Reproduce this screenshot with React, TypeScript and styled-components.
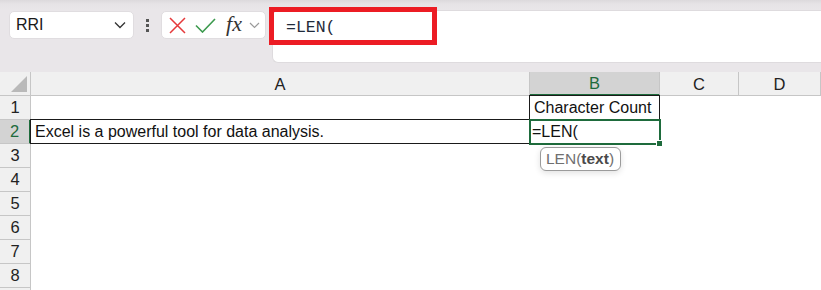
import React from "react";
import styled, { createGlobalStyle } from "styled-components";

const Global = createGlobalStyle`
  html, body { margin: 0; padding: 0; background: #ffffff; }
  body { font-family: "Liberation Sans", Arial, sans-serif; width: 821px; height: 290px; overflow: hidden; }
`;

const Page = styled.div`
  width: 821px;
  height: 290px;
  overflow: hidden;
  display: flex;
  flex-direction: column;
`;

const Toolbar = styled.div`
  flex-shrink: 0;
  height: 72px;
  box-sizing: border-box;
  background: linear-gradient(#dcd9dc 0px, #e6e3e6 4px, #e9e6e9 10px);
  display: flex;
  align-items: flex-start;
  padding: 0 0 0 9px;
`;

const NameBox = styled.div`
  margin-top: 11px;
  width: 125px;
  height: 28px;
  box-sizing: border-box;
  background: #fff;
  border-radius: 5px;
  border: 1px solid #e0dde0;
  display: flex;
  align-items: center;
  justify-content: space-between;
  padding: 0 7px 0 6px;
  font-size: 16px;
  color: #1a1a1a;
`;

const Dots = styled.div`
  width: 27px;
  margin-top: 19px;
  display: flex;
  flex-direction: column;
  align-items: center;
  gap: 2px;
  & > span { width: 3px; height: 3px; background: #555; display: block; }
`;

const FnBox = styled.div`
  margin-top: 11px;
  width: 105px;
  height: 28px;
  box-sizing: border-box;
  background: #fff;
  border-radius: 5px;
  border: 1px solid #e0dde0;
  display: flex;
  align-items: center;
  padding-left: 4px;
`;

const IconSlot = styled.div<{ $w: number }>`
  width: ${(p) => p.$w}px;
  display: flex;
  align-items: center;
  justify-content: center;
`;

const Fx = styled.span`
  font-family: "Liberation Serif", "Times New Roman", serif;
  font-style: italic;
  font-size: 22px;
  color: #333;
  line-height: 1;
  margin-top: -3px;
`;

const FormulaBar = styled.div`
  position: relative;
  margin-top: 10px;
  margin-left: 6px;
  flex: 1;
  height: 53px;
  background: #fff;
  border: 1px solid #dedbde;
  border-right: none;
  border-radius: 6px 0 0 6px;
  box-sizing: border-box;
  padding: 6px 0 0 13px;
`;

const FormulaText = styled.span`
  font-family: "Liberation Mono", "Courier New", monospace;
  font-size: 16.5px;
  color: #1f2a3a;
  line-height: 22px;
`;

const Highlight = styled.div`
  position: absolute;
  left: -4px;
  top: -4px;
  width: 168px;
  height: 38px;
  box-sizing: border-box;
  border: 5px solid #ec1c24;
  pointer-events: none;
`;

const Sheet = styled.div`
  position: relative;
  flex: 1;
  min-height: 0;
  overflow: hidden;
  display: flex;
  flex-direction: column;
  background: #fff;
`;

const Row = styled.div`
  flex-shrink: 0;
  display: grid;
  grid-template-columns: 31px 499px 130px 79px 82px;
  height: 24px;
`;

const Corner = styled.div`
  background: #f0f0f0;
  border-right: 1px solid #c6c6c6;
  border-bottom: 1px solid #c6c6c6;
  position: relative;
  &::after {
    content: "";
    position: absolute;
    right: 3px;
    bottom: 3px;
    width: 0;
    height: 0;
    border-left: 16px solid transparent;
    border-bottom: 16px solid #b9b9b9;
  }
`;

const ColHead = styled.div<{ $sel?: boolean }>`
  background: ${(p) => (p.$sel ? "#d3d3d3" : "#f0f0f0")};
  color: ${(p) => (p.$sel ? "#1e6b3c" : "#222")};
  border-right: 1px solid #c6c6c6;
  border-bottom: ${(p) => (p.$sel ? "2px solid #1e6b3c" : "1px solid #c6c6c6")};
  box-sizing: border-box;
  display: flex;
  align-items: center;
  justify-content: center;
  font-size: 16.5px;
  padding-top: 1px;
`;

const RowHead = styled.div<{ $sel?: boolean }>`
  background: ${(p) => (p.$sel ? "#d3d3d3" : "#f0f0f0")};
  color: ${(p) => (p.$sel ? "#1e6b3c" : "#222")};
  border-right: ${(p) => (p.$sel ? "2px solid #1e6b3c" : "1px solid #c6c6c6")};
  border-bottom: 1px solid #c6c6c6;
  box-sizing: border-box;
  display: flex;
  align-items: center;
  justify-content: center;
  font-size: 16.5px;
`;

const Cell = styled.div<{ $box?: boolean; $active?: boolean }>`
  position: relative;
  box-sizing: border-box;
  font-size: 16px;
  color: #111;
  display: flex;
  align-items: center;
  padding-left: ${(p) => (p.$active ? "1px" : "4px")};
  white-space: nowrap;
  ${(p) => (p.$box ? "border: 1px solid #1a1a1a; margin: -1px 0 0 -1px; height: 25px;" : "")}
  ${(p) =>
    p.$active
      ? "border: 2px solid #1e6b3c; margin: -1px -1px -1px -1px; height: 26px; z-index: 2;"
      : ""}
`;

const FillHandle = styled.span`
  position: absolute;
  right: -4px;
  bottom: -4px;
  width: 5px;
  height: 5px;
  background: #1e6b3c;
  border: 1px solid #fff;
`;

const Tip = styled.div`
  position: absolute;
  left: 540px;
  top: 75px;
  height: 24px;
  box-sizing: border-box;
  border: 1px solid #9b9b9b;
  border-radius: 6px;
  background: #fff;
  box-shadow: 0 2px 6px rgba(0, 0, 0, 0.12);
  padding: 0 6px 0 5px;
  display: flex;
  align-items: center;
  font-size: 15.5px;
  color: #707070;
  z-index: 3;
  & b { color: #4a4a4a; font-weight: 700; }
`;

const rows = [3, 4, 5, 6, 7, 8];

export default function App() {
  return (
    <Page>
      <Global />
      <Toolbar>
        <NameBox>
          <span>RRI</span>
          <svg width="12" height="8" viewBox="0 0 12 8">
            <path d="M1 1.5 L6 6.5 L11 1.5" fill="none" stroke="#333" strokeWidth="1.3" />
          </svg>
        </NameBox>
        <Dots>
          <span />
          <span />
          <span />
        </Dots>
        <FnBox>
          <IconSlot $w={22}>
            <svg width="17" height="17" viewBox="0 0 17 17">
              <path d="M1 1 L16 16 M16 1 L1 16" stroke="#e5393b" strokeWidth="1.5" fill="none" />
            </svg>
          </IconSlot>
          <IconSlot $w={34}>
            <svg width="21" height="15" viewBox="0 0 21 15">
              <path d="M1 7.5 L7.5 14 L20 1" stroke="#3c9a4e" strokeWidth="1.6" fill="none" />
            </svg>
          </IconSlot>
          <IconSlot $w={24}>
            <Fx>fx</Fx>
          </IconSlot>
          <IconSlot $w={16}>
            <svg width="11" height="7" viewBox="0 0 11 7">
              <path d="M1 1 L5.5 5.5 L10 1" fill="none" stroke="#9a9a9a" strokeWidth="1.2" />
            </svg>
          </IconSlot>
        </FnBox>
        <FormulaBar>
          <FormulaText>=LEN(</FormulaText>
          <Highlight />
        </FormulaBar>
      </Toolbar>
      <Sheet>
        <Row>
          <Corner />
          <ColHead>A</ColHead>
          <ColHead $sel>B</ColHead>
          <ColHead>C</ColHead>
          <ColHead>D</ColHead>
        </Row>
        <Row>
          <RowHead>1</RowHead>
          <Cell />
          <Cell $box>Character Count</Cell>
          <Cell />
          <Cell />
        </Row>
        <Row>
          <RowHead $sel>2</RowHead>
          <Cell $box>Excel is a powerful tool for data analysis.</Cell>
          <Cell $active>
            =LEN(
            <FillHandle />
          </Cell>
          <Cell />
          <Cell />
        </Row>
        {rows.map((n) => (
          <Row key={n}>
            <RowHead>{n}</RowHead>
            <Cell />
            <Cell />
            <Cell />
            <Cell />
          </Row>
        ))}
        <Row>
          <RowHead />
          <Cell />
          <Cell />
          <Cell />
          <Cell />
        </Row>
        <Tip>
          LEN(<b>text</b>)
        </Tip>
      </Sheet>
    </Page>
  );
}
